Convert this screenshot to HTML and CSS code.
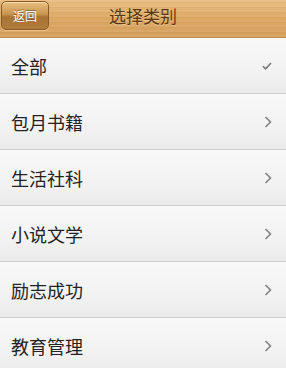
FILE: index.html
```html
<!DOCTYPE html>
<html>
<head>
<meta charset="utf-8">
<link rel="stylesheet" href="styles.css">
</head>
<body>
<div class="header">
  <div class="back">返回</div>
  <div class="title">选择类别</div>
</div>
<ul class="list">
  <li class="row"><span class="label">全部</span><svg class="icon" width="10" height="8" viewBox="0 0 10 8"><path d="M1 4.2 L3.6 6.8 L9 1" fill="none" stroke="#777" stroke-width="1.6"/></svg></li>
  <li class="row"><span class="label">包月书籍</span><svg class="icon" width="8" height="12" viewBox="0 0 8 12"><path d="M1.5 1 L6.5 6 L1.5 11" fill="none" stroke="#808080" stroke-width="1.6"/></svg></li>
  <li class="row"><span class="label">生活社科</span><svg class="icon" width="8" height="12" viewBox="0 0 8 12"><path d="M1.5 1 L6.5 6 L1.5 11" fill="none" stroke="#808080" stroke-width="1.6"/></svg></li>
  <li class="row"><span class="label">小说文学</span><svg class="icon" width="8" height="12" viewBox="0 0 8 12"><path d="M1.5 1 L6.5 6 L1.5 11" fill="none" stroke="#808080" stroke-width="1.6"/></svg></li>
  <li class="row"><span class="label">励志成功</span><svg class="icon" width="8" height="12" viewBox="0 0 8 12"><path d="M1.5 1 L6.5 6 L1.5 11" fill="none" stroke="#808080" stroke-width="1.6"/></svg></li>
  <li class="row"><span class="label">教育管理</span><svg class="icon" width="8" height="12" viewBox="0 0 8 12"><path d="M1.5 1 L6.5 6 L1.5 11" fill="none" stroke="#808080" stroke-width="1.6"/></svg></li>
</ul>
</body>
</html>
```
FILE: styles.css
```css
html, body {
  margin: 0;
  padding: 0;
  background: #f4f4f4;
  font-family: "Noto Sans CJK SC", "Noto Sans", sans-serif;
  overflow: hidden;
}
.header {
  height: 37px;
  position: relative;
  display: flex;
  align-items: center;
  justify-content: center;
  background:
    repeating-linear-gradient(180deg, rgba(255,255,255,0.06) 0 2px, rgba(0,0,0,0.03) 2px 3px, rgba(255,255,255,0) 3px 5px),
    linear-gradient(180deg, #e9bd80 0%, #dca864 50%, #d59f5c 100%);
  border-bottom: 1px solid #b9884a;
}
.back {
  position: absolute;
  left: 1px;
  top: 1px;
  width: 48px;
  height: 29px;
  box-sizing: border-box;
  border-radius: 5px;
  border: 1px solid #8a5a24;
  background: linear-gradient(180deg, #e8c181 0%, #c99550 45%, #a87436 55%, #b07c3c 100%);
  box-shadow: inset 0 1px 0 rgba(255,240,200,0.6), 0 1px 0 rgba(255,230,180,0.5);
  color: #fff;
  font-size: 12px;
  display: flex;
  align-items: center;
  justify-content: center;
  text-shadow: 0 -1px 0 rgba(90,50,10,0.5);
}
.title {
  color: #5a3712;
  font-size: 17px;
  margin-top: -6px;
  text-shadow: 0 1px 0 rgba(255,230,180,0.5);
}
.list {
  list-style: none;
  margin: 0;
  padding: 0;
}
.row {
  height: 55px;
  display: flex;
  align-items: center;
  justify-content: space-between;
  padding: 0 14px 0 11px;
  background: linear-gradient(180deg, #f8f8f8 0%, #f2f2f2 60%, #ebebeb 100%);
  border-bottom: 1px solid #cacaca;
  box-shadow: inset 0 1px 0 #ffffff;
}
.label {
  font-size: 18px;
  color: #222;
}
.icon {
  display: block;
}
```
